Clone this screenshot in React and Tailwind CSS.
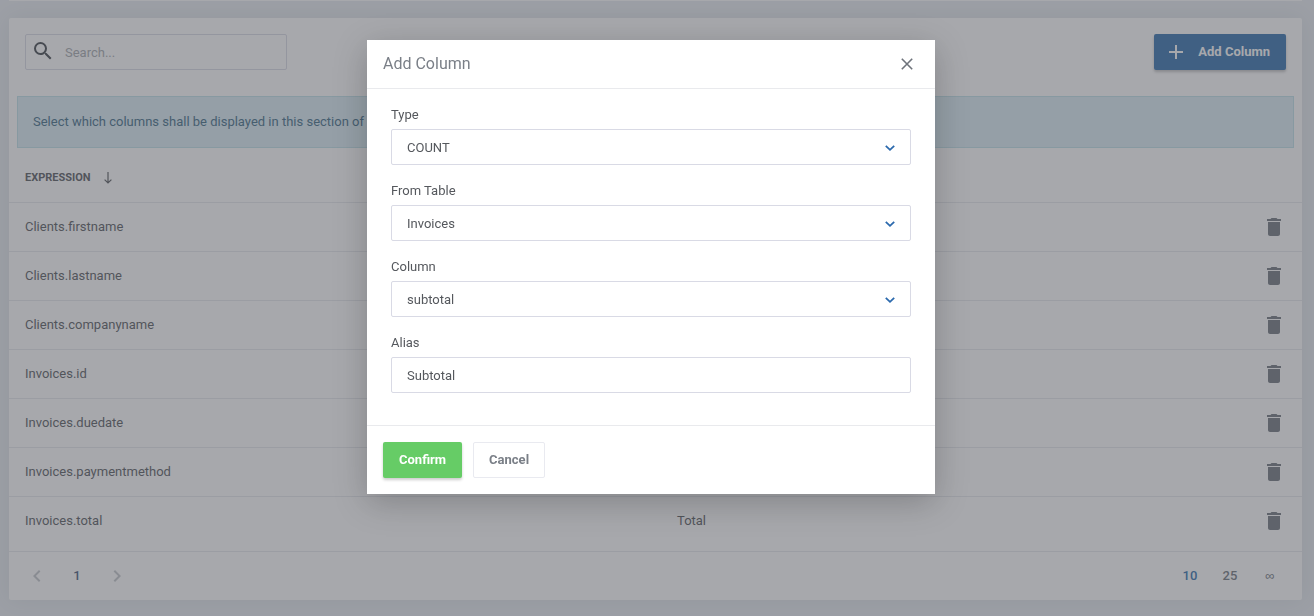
import { useState } from 'react';
import { MdAdd, MdChevronLeft, MdChevronRight, MdDelete, MdSearch } from 'react-icons/md';

const ROWS = [
  { expression: 'Clients.firstname', alias: '' },
  { expression: 'Clients.lastname', alias: '' },
  { expression: 'Clients.companyname', alias: '' },
  { expression: 'Invoices.id', alias: '' },
  { expression: 'Invoices.duedate', alias: '' },
  { expression: 'Invoices.paymentmethod', alias: '' },
  { expression: 'Invoices.total', alias: 'Total' }
];

const SelectField = ({ id, label, options }) => (
  <div>
    <label htmlFor={id} className="block mb-1 leading-5">{label}</label>
    <div className="relative">
      <select
        id={id}
        className="block w-full h-9 pt-[2px] pl-[15px] pr-10 appearance-none rounded-xs border border-[#d9dae5] bg-white outline-none"
      >
        {options.map(o => <option key={o}>{o}</option>)}
      </select>
      <svg
        className="absolute right-[15px] top-1/2 -translate-y-1/2 w-3 h-3 text-[#2b69ad] pointer-events-none"
        viewBox="0 0 12 12" fill="none" stroke="currentColor" strokeWidth="1.8"
      >
        <path d="M1.8 4.8 6 8.8l4.2-4" />
      </svg>
    </div>
  </div>
);

const AddColumnModal = () => {
  const [alias, setAlias] = useState('Subtotal');

  return (
    <div className="fixed inset-0 z-10 flex items-start justify-center pt-10 pr-3 bg-[#505159]/50">
      <div
        role="dialog"
        aria-labelledby="modal-title"
        className="w-full max-w-[568px] bg-white text-[#55585d] shadow-[0_8px_32px_rgba(0,0,0,0.22)]"
      >
        <div className="flex items-center justify-between h-[49px] pl-4 pr-[18px] border-b border-[#e9eaed]">
          <h2 id="modal-title" className="text-base text-[#7a7f87]">Add Column</h2>
          <button aria-label="Close" className="flex items-center justify-center w-5 h-5 text-[#6e737b]">
            <svg className="w-3 h-3" viewBox="0 0 12 12" fill="none" stroke="currentColor" strokeWidth="1.6">
              <path d="m.8.8 10.4 10.4M11.2.8.8 11.2" />
            </svg>
          </button>
        </div>

        <div className="flex flex-col gap-4 px-6 pt-4 pb-8">
          <SelectField id="type" label="Type" options={['COUNT']} />
          <SelectField id="table" label="From Table" options={['Invoices']} />
          <SelectField id="column" label="Column" options={['subtotal']} />
          <div>
            <label htmlFor="alias" className="block mb-1 leading-5">Alias</label>
            <input
              id="alias"
              type="text"
              className="block w-full h-9 px-[15px] rounded-xs border border-[#d9dae5] outline-none"
              value={alias}
              onChange={e => setAlias(e.target.value)}
            />
          </div>
        </div>

        <div className="flex gap-[11px] p-4 border-t border-[#e9eaed]">
          <button className="h-9 px-4 rounded-xs bg-[#66cc66] text-white font-bold shadow-[0_2px_3px_rgba(0,0,0,0.2)]">
            Confirm
          </button>
          <button className="h-9 px-[15px] rounded-xs border border-[#e9eaf0] text-[#7a7f87] font-bold">
            Cancel
          </button>
        </div>
      </div>
    </div>
  );
};

const App = () => (
  <div className="min-h-screen pl-[9px] pr-3 bg-[#e9edf2] font-[Roboto,sans-serif] text-[13px] text-[#55585d]">
    {/* Bottom edge of the panel above */}
    <div className="h-px bg-white shadow-[0_0_24px_rgba(60,80,70,0.1)]" />

    <div className="mt-[17px] rounded-xs bg-white shadow-[0_0_24px_rgba(60,80,70,0.1)]">
      <div className="flex items-center justify-between p-4">
        <div className="relative w-[262px]">
          <MdSearch className="absolute left-[6px] top-[5px] w-6 h-6 text-[#3f444a]" />
          <input
            type="text"
            aria-label="Search"
            placeholder="Search..."
            className="block w-full h-9 pl-[39px] pr-3 rounded-xs border border-[#d9dae5] outline-none placeholder:text-[#a5a8ad]"
          />
        </div>
        <button className="flex items-center gap-[10px] h-9 pl-[10px] pr-4 rounded-xs bg-[#306fad] text-white font-bold shadow-[0_2px_3px_rgba(0,0,0,0.25)]">
          <MdAdd className="w-6 h-6" /> Add Column
        </button>
      </div>

      <div className="mx-2 mt-[10px] px-[15px] py-4 leading-[18px] border border-[#bfe0e8] bg-[#daedf5] text-[#3d6a85]">
        Select which columns shall be displayed in this section of
      </div>

      <table className="w-full table-fixed text-left">
        <thead>
          <tr className="h-[54px] border-b border-[#e6e8ec]">
            <th className="px-4 pt-[6px] text-[11px] font-bold">
              <span className="flex items-center gap-[13px]">
                EXPRESSION
                <svg className="w-2 h-3" viewBox="0 0 8 12" fill="none" stroke="currentColor" strokeWidth="1.2">
                  <path d="M4 0v11M.6 7.6 4 11l3.4-3.4" />
                </svg>
              </span>
            </th>
            <th className="w-[585px] px-4" />
            <th className="w-14" />
          </tr>
        </thead>
        <tbody>
          {ROWS.map(row => (
            <tr key={row.expression} className="h-[49px] border-b border-[#e6e8ec] last:border-b-0">
              <td className="px-4">{row.expression}</td>
              <td className="px-4">{row.alias}</td>
              <td className="pl-4">
                <button aria-label={`Delete ${row.expression}`} className="block text-[#6e757d]">
                  <MdDelete className="w-6 h-6" />
                </button>
              </td>
            </tr>
          ))}
        </tbody>
      </table>

      <div className="flex justify-between mt-[6px] pl-2 pr-3 h-[49px] border-t border-[#e6e8ec] font-medium">
        <div className="flex items-center">
          <button aria-label="Previous page" className="flex justify-center w-10 text-[#c3c6ca]"><MdChevronLeft className="w-6 h-6" /></button>
          <button className="w-10 text-[#43597a]">1</button>
          <button aria-label="Next page" className="flex justify-center w-10 text-[#c3c6ca]"><MdChevronRight className="w-6 h-6" /></button>
        </div>
        <div className="flex items-center">
          <button className="w-10 text-[#306fad]">10</button>
          <button className="w-10 text-[#6e757d]">25</button>
          <button className="w-10 text-[#6e757d] font-['Liberation_Sans',sans-serif]">∞</button>
        </div>
      </div>
    </div>

    <AddColumnModal />
  </div>
);

export default App;
